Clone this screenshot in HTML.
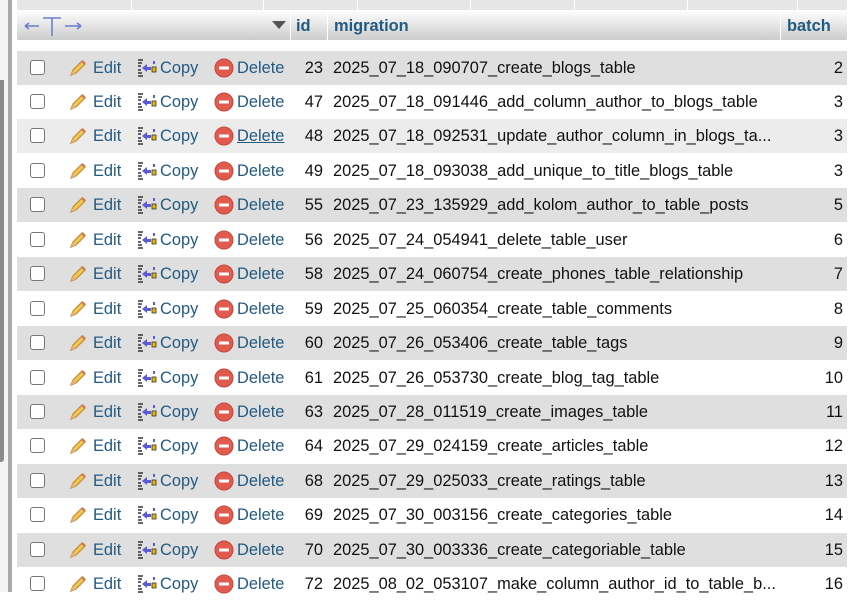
<!DOCTYPE html>
<html><head><meta charset="utf-8"><style>
*{margin:0;padding:0;box-sizing:border-box}
body{width:864px;height:592px;overflow:hidden;background:#fff;font-family:"Liberation Sans",Arial,sans-serif;font-size:16.4px;position:relative}
.a{position:absolute}
.row{position:absolute;left:17px;width:830px;height:34px;color:#111}
.g{background:#dfdfdf}.h{background:#ececec}
.row span{position:absolute;top:8px;white-space:nowrap}
.l{color:#235a81}
.cb{position:absolute;left:13px;top:9px;width:15px;height:15px;border:1px solid #777;border-radius:3px;background:#fff}
</style></head><body>
<div class="a" style="left:0;top:0;width:8px;height:592px;background:#f3f3f3"></div>
<div class="a" style="left:0;top:80px;width:4px;height:382px;background:#8a8a8a;border-radius:0 0 3px 0"></div>
<div class="a" style="left:8px;top:0;width:4px;height:592px;background:#aaa"></div>
<div class="a" style="left:17px;top:0;width:830px;height:10px;background:#e6e6e6"></div>
<div class="a" style="left:131px;top:0;width:1px;height:10px;background:#fff"></div>
<div class="a" style="left:263px;top:0;width:1px;height:10px;background:#fff"></div>
<div class="a" style="left:357px;top:0;width:1px;height:10px;background:#fff"></div>
<div class="a" style="left:470px;top:0;width:1px;height:10px;background:#fff"></div>
<div class="a" style="left:574px;top:0;width:1px;height:10px;background:#fff"></div>
<div class="a" style="left:687px;top:0;width:1px;height:10px;background:#fff"></div>
<div class="a" style="left:797px;top:0;width:1px;height:10px;background:#fff"></div>
<div class="a" style="left:17px;top:10px;width:830px;height:30px;background:linear-gradient(#fff,#ccc);color:#235a81;font-weight:bold">
<svg class="a" style="left:6px;top:4px" width="60" height="24" viewBox="0 0 60 24"><g stroke="#6b7fd0" stroke-width="1.6" fill="none"><path d="M2 12H16M2 12L6 9M2 12L6 15"/><path d="M20 4H38M29 4V22"/><path d="M42 12H58M58 12L54 9M58 12L54 15"/></g></svg>
<span class="a" style="left:255px;top:11px;width:0;height:0;border-left:7px solid transparent;border-right:7px solid transparent;border-top:8px solid #555"></span>
<div class="a" style="left:273px;top:0;width:1px;height:30px;background:#fff"></div>
<span class="a" style="left:279px;top:7px">id</span>
<div class="a" style="left:310px;top:0;width:1px;height:30px;background:#fff"></div>
<span class="a" style="left:317px;top:7px">migration</span>
<div class="a" style="left:763px;top:0;width:1px;height:30px;background:#fff"></div>
<span class="a" style="left:770px;top:7px">batch</span>
</div>
<div id="rows"></div>
<script>
var d=[[23,"2025_07_18_090707_create_blogs_table",2],[47,"2025_07_18_091446_add_column_author_to_blogs_table",3],[48,"2025_07_18_092531_update_author_column_in_blogs_ta...",3],[49,"2025_07_18_093038_add_unique_to_title_blogs_table",3],[55,"2025_07_23_135929_add_kolom_author_to_table_posts",5],[56,"2025_07_24_054941_delete_table_user",6],[58,"2025_07_24_060754_create_phones_table_relationship",7],[59,"2025_07_25_060354_create_table_comments",8],[60,"2025_07_26_053406_create_table_tags",9],[61,"2025_07_26_053730_create_blog_tag_table",10],[63,"2025_07_28_011519_create_images_table",11],[64,"2025_07_29_024159_create_articles_table",12],[68,"2025_07_29_025033_create_ratings_table",13],[69,"2025_07_30_003156_create_categories_table",14],[70,"2025_07_30_003336_create_categoriable_table",15],[72,"2025_08_02_053107_make_column_author_id_to_table_b...",16]];
var pen='<svg width="20" height="20" viewBox="0 0 20 20" style="position:absolute;left:51px;top:7px"><path d="M3 17 L5 12 L14 3 L17 6 L8 15 Z" fill="#f2c94c" stroke="#c08a3a" stroke-width="1.2"/><path d="M3 17 L5 12 L8 15 Z" fill="#e8b27a"/><path d="M14 3 L17 6" stroke="#d07a5a" stroke-width="2.5"/></svg>';
var cp='<svg width="20" height="18" viewBox="0 0 20 18" style="position:absolute;left:120px;top:8px"><path d="M1 1h5M1 4h4M1 7h3M1 11h3M1 14h4M1 17h5" stroke="#333" stroke-width="1.6"/><path d="M5 9 L10 5 L10 8 L14 8 L14 11 L10 11 L10 13 Z" fill="#5b5bd6"/><rect x="15" y="8" width="4" height="5" fill="#e6b800" stroke="#333" stroke-width=".8"/><rect x="16" y="2" width="2" height="3" fill="#5b5bd6"/></svg>';
var del='<svg width="20" height="20" viewBox="0 0 20 20" style="position:absolute;left:197px;top:7px"><circle cx="10" cy="10" r="9" fill="#e05a4e" stroke="#c8453c"/><rect x="5" y="8.5" width="10" height="3" fill="#fff"/></svg>';
var h='';
for(var i=0;i<d.length;i++){var t=Math.round(50.5+34.45*i);var c=i==2?'h':(i%2==0?'g':'');
h+='<div class="row '+c+'" style="top:'+t+'px"><div class="cb"></div>'+pen+'<span class="l" style="left:76px">Edit</span>'+cp+'<span class="l" style="left:143px">Copy</span>'+del+'<span class="l" style="left:220px;'+(i==2?'text-decoration:underline':'')+'">'+(i==2?' ':'')+'Delete</span><span style="right:524px">'+d[i][0]+'</span><span style="left:316px">'+d[i][1]+'</span><span style="right:4px">'+d[i][2]+'</span></div>';}
document.getElementById('rows').innerHTML=h;
</script>
</body></html>
